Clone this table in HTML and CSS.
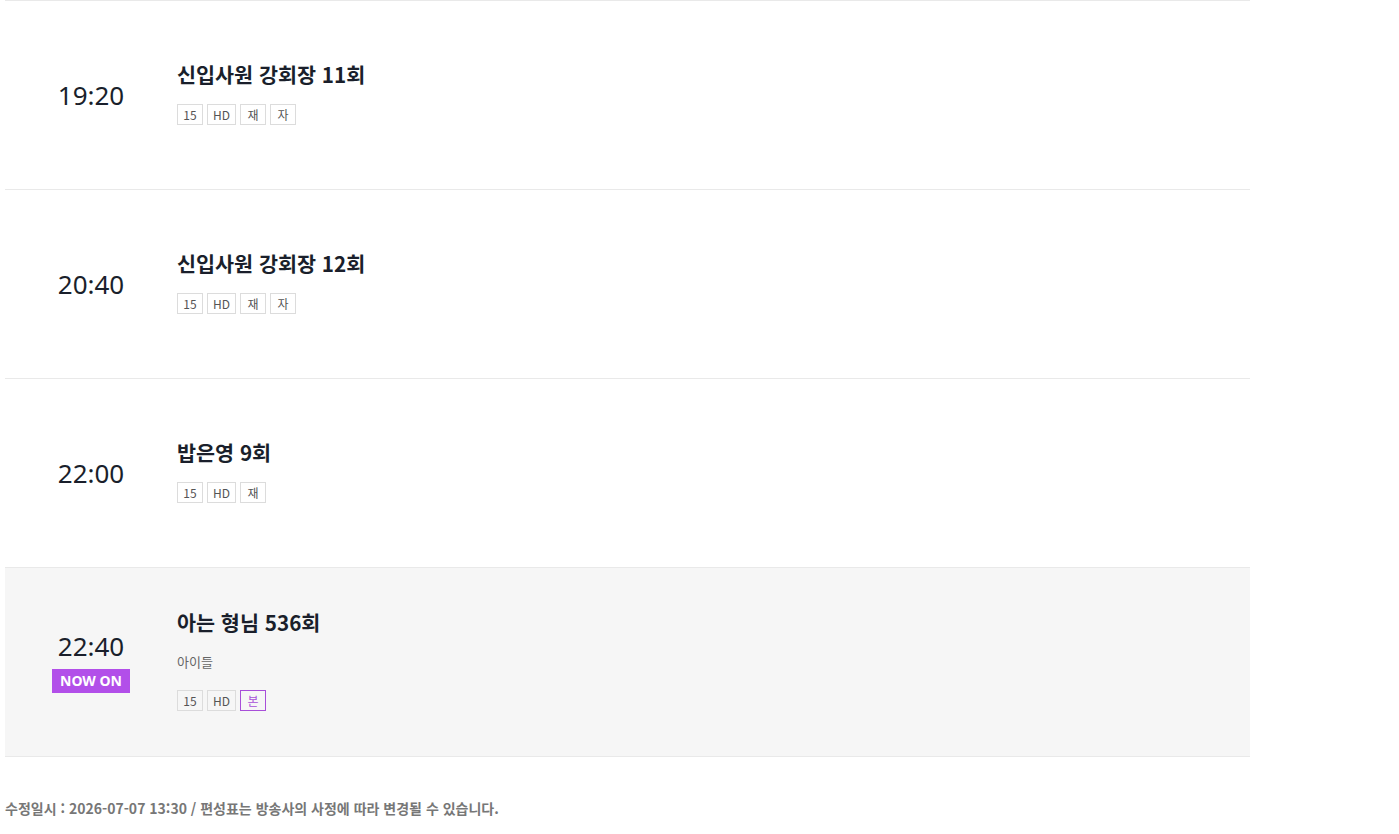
FILE: index.html
```html
<!DOCTYPE html>
<html lang="ko">
<head>
<meta charset="utf-8">
<link rel="stylesheet" href="styles.css">
</head>
<body>
<div class="schedule">
  <ul class="list">
    <li class="row">
      <div class="time-col"><span class="time">19:20</span></div>
      <div class="info">
        <h3 class="title">신입사원 강회장 11회</h3>
        <div class="tags"><span class="tag">15</span><span class="tag">HD</span><span class="tag">재</span><span class="tag">자</span></div>
      </div>
    </li>
    <li class="row">
      <div class="time-col"><span class="time">20:40</span></div>
      <div class="info">
        <h3 class="title">신입사원 강회장 12회</h3>
        <div class="tags"><span class="tag">15</span><span class="tag">HD</span><span class="tag">재</span><span class="tag">자</span></div>
      </div>
    </li>
    <li class="row">
      <div class="time-col"><span class="time">22:00</span></div>
      <div class="info">
        <h3 class="title">밥은영 9회</h3>
        <div class="tags"><span class="tag">15</span><span class="tag">HD</span><span class="tag">재</span></div>
      </div>
    </li>
    <li class="row row-now">
      <div class="time-col"><span class="time">22:40</span><span class="now">NOW ON</span></div>
      <div class="info">
        <h3 class="title">아는 형님 536회</h3>
        <p class="sub">아이들</p>
        <div class="tags"><span class="tag">15</span><span class="tag">HD</span><span class="tag tag-main">본</span></div>
      </div>
    </li>
  </ul>
  <p class="notice">수정일시 : 2026-07-07 13:30 / 편성표는 방송사의 사정에 따라 변경될 수 있습니다.</p>
</div>
</body>
</html>
```
FILE: styles.css
```css
* { box-sizing: border-box; }
html, body { margin: 0; padding: 0; background: #fff; }
body {
  font-family: "Noto Sans CJK KR", "Noto Sans", sans-serif;
  color: #1a1f2b;
}
.schedule {
  width: 1245px;
  margin-left: 5px;
}
.list {
  list-style: none;
  margin: 0;
  padding: 0;
  border-top: 1px solid #e9e9e9;
}
.row {
  display: flex;
  align-items: center;
  height: 189px;
  border-bottom: 1px solid #e9e9e9;
}
.row-now { background: #f6f6f6; }
.time-col {
  width: 172px;
  flex: none;
  display: flex;
  flex-direction: column;
  align-items: center;
}
.time {
  font-family: "Noto Sans", "Noto Sans CJK KR", sans-serif;
  font-size: 26px;
  line-height: 30px;
  color: #1a1f2b;
}
.now {
  margin-top: 8px;
  background: #b24fe9;
  color: #fff;
  font-family: "Noto Sans", sans-serif;
  font-weight: 700;
  font-size: 14px;
  line-height: 24px;
  width: 78px;
  text-align: center;
}
.info {
  display: flex;
  flex-direction: column;
  align-items: flex-start;
  padding-bottom: 4px;
}
.title {
  margin: 0;
  font-size: 20.7px;
  line-height: 26px;
  font-weight: 700;
  color: #1a1f2b;
}
.sub {
  margin: 18px 0 0;
  font-size: 13px;
  line-height: 18px;
  color: #666;
}
.tags { display: flex; gap: 4px; margin-top: 17px; }
.row-now .tags { margin-top: 19px; }
.tag {
  display: inline-block;
  height: 21px;
  line-height: 19px;
  padding: 0 5px;
  min-width: 26px;
  text-align: center;
  border: 1px solid #dcdcdc;
  font-size: 12px;
  color: #555;
  background: #fff;
}
.row-now .tag { background: #f6f6f6; }
.tag-main { border-color: #a84fd9; color: #a84fd9; }
.notice {
  margin: 42px 0 0;
  font-size: 14px;
  line-height: 18px;
  font-weight: 700;
  color: #777;
}
```
